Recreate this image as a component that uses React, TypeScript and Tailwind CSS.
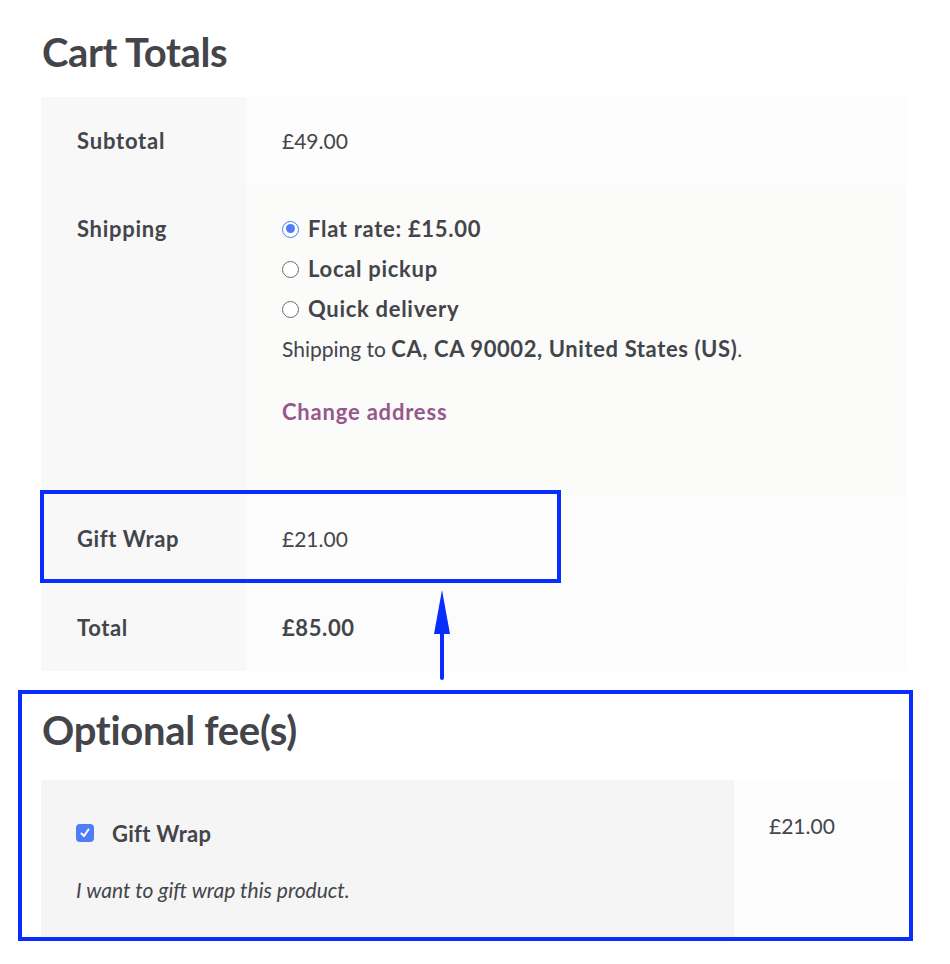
import React from "react";

const font = { fontFamily: "Lato, 'Noto Sans', sans-serif" };

function Radio({ checked }: { checked?: boolean }) {
  return (
    <span
      className={
        checked
          ? "inline-block w-[17px] h-[17px] rounded-full border-[1.5px] border-[#4f7cf7] bg-white relative shrink-0"
          : "inline-block w-[17px] h-[17px] rounded-full border border-[#6b6b6b] bg-white shrink-0"
      }
    >
      {checked && (
        <span className="absolute left-[2.5px] top-[2.5px] w-[9px] h-[9px] rounded-full bg-[#4f7cf7]" />
      )}
    </span>
  );
}

export default function App() {
  return (
    <div
      className="w-[950px] h-[964px] bg-white text-[#43454b] relative overflow-hidden"
      style={font}
    >
      <h2 className="ml-[42px] pt-[28px] text-[40px] leading-[48px] font-bold tracking-[-0.4px]">
        Cart Totals
      </h2>

      <div className="ml-[41px] mt-[21px] w-[866px] grid grid-cols-[205px_661px] text-[21px]">
        {/* Subtotal */}
        <div className="bg-[#f8f8f8] pl-[36px] py-6 leading-[40px] font-bold text-[22px] tracking-[0.8px]">Subtotal</div>
        <div className="bg-[#fdfdfd] pl-[36px] py-6 leading-[40px]">£49.00</div>

        {/* Shipping */}
        <div className="bg-[#f8f8f8] pl-[36px] pt-6 leading-[40px] font-bold text-[22px] tracking-[0.7px]">Shipping</div>
        <div className="bg-[#fbfbfa] pl-[36px] pt-6 pb-[64px] leading-[40px]">
          <div className="flex items-center gap-[9px] font-bold text-[22px] tracking-[0.7px]">
            <Radio checked />
            <span>Flat rate: £15.00</span>
          </div>
          <div className="flex items-center gap-[9px] font-bold text-[22px] tracking-[0.7px]">
            <Radio />
            <span>Local pickup</span>
          </div>
          <div className="flex items-center gap-[9px] font-bold text-[22px] tracking-[0.7px]">
            <Radio />
            <span>Quick delivery</span>
          </div>
          <div>
            Shipping to <b className="font-bold text-[22px] tracking-[0.6px]">CA, CA 90002, United States (US)</b>.
          </div>
          <div className="mt-[23px] font-bold text-[22px] tracking-[0.8px] text-[#96588a]">Change address</div>
        </div>

        {/* Gift Wrap */}
        <div className="bg-[#f8f8f8] pl-[36px] pt-[23px] pb-[22px] leading-[40px] font-bold text-[22px] tracking-[0.6px]">Gift Wrap</div>
        <div className="bg-[#fdfdfd] pl-[36px] pt-[23px] pb-[22px] leading-[40px]">£21.00</div>

        {/* Total */}
        <div className="bg-[#f8f8f8] pl-[36px] pt-[27px] pb-[23px] leading-[40px] font-bold text-[22px] tracking-[0.6px]">Total</div>
        <div className="bg-[#fcfcfc] pl-[36px] pt-[27px] pb-[23px] leading-[40px] font-bold text-[22px] tracking-[0.6px]">£85.00</div>
      </div>

      {/* Annotation box around Gift Wrap row */}
      <div className="absolute left-[40px] top-[490px] w-[521px] h-[93px] border-[4px] border-[#0a2dff]" />

      {/* Arrow */}
      <svg className="absolute left-[430px] top-[588px]" width="24" height="94" viewBox="0 0 24 94">
        <line x1="12" y1="40" x2="12" y2="90" stroke="#0a2dff" strokeWidth="4" strokeLinecap="round" />
        <polygon points="12,2 4,46 20,46" fill="#0a2dff" />
      </svg>

      {/* Optional fees section */}
      <div className="absolute left-[18px] top-[690px] w-[895px] h-[251px] border-[4px] border-[#0a2dff] flex flex-col">
        <h2 className="pl-[20px] pt-[12px] text-[40px] leading-[48px] font-bold tracking-[-0.3px]">
          Optional fee(s)
        </h2>
        <div className="mt-[26px] ml-[19px] flex flex-1">
          <div className="w-[693px] bg-[#f5f5f5] pl-[35px] pt-[40px]">
            <div className="flex items-center gap-[18px] h-[26px]">
              <span className="w-[18px] h-[18px] rounded-[4px] bg-[#4f7cf7] flex items-center justify-center shrink-0">
                <svg width="12" height="12" viewBox="0 0 12 12">
                  <path d="M2.5 6.5 L5 9 L9.5 2.5" fill="none" stroke="white" strokeWidth="2" strokeLinecap="round" strokeLinejoin="round" />
                </svg>
              </span>
              <span className="text-[22px] font-bold tracking-[0.3px]">Gift Wrap</span>
            </div>
            <div className="mt-[28px] text-[21px] italic">I want to gift wrap this product.</div>
          </div>
          <div className="flex-1 bg-[#fdfdfd] pl-[35px] pt-[30px] text-[21px]">£21.00</div>
        </div>
      </div>
    </div>
  );
}
